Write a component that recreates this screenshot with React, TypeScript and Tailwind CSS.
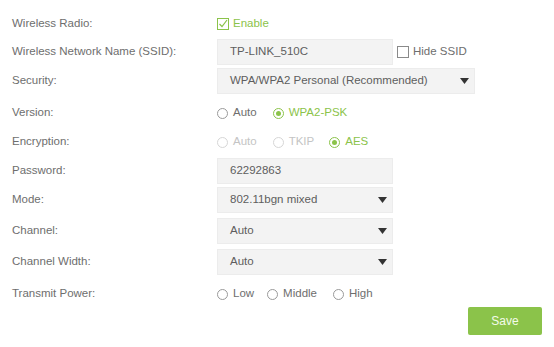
const GREEN = "text-[#8bc34a]";

function Row({ label, children, className = "" }: { label: string; children: React.ReactNode; className?: string }) {
  return (
    <div className={`flex items-center h-[26px] ${className}`}>
      <div className="w-[217px] pl-[12px] text-[#6e6e6e]">{label}</div>
      <div className="flex items-center">{children}</div>
    </div>
  );
}

function Radio({ label, checked = false, disabled = false, className = "" }: { label: string; checked?: boolean; disabled?: boolean; className?: string }) {
  const border = checked ? "border-[#8bc34a]" : disabled ? "border-[#d6d6d6]" : "border-[#9a9a9a]";
  const text = checked ? GREEN : disabled ? "text-[#c4c4c4]" : "text-[#6e6e6e]";
  return (
    <div className={`flex items-center ${className}`}>
      <span className={`w-[11px] h-[11px] rounded-full border ${border} flex items-center justify-center`}>
        {checked && <span className="w-[5px] h-[5px] rounded-full bg-[#8bc34a]" />}
      </span>
      <span className={`ml-[5px] ${text}`}>{label}</span>
    </div>
  );
}

function Check({ label, checked = false, className = "" }: { label: string; checked?: boolean; className?: string }) {
  return (
    <div className={`flex items-center ${className}`}>
      <span className={`w-[12px] h-[12px] border ${checked ? "border-[#8bc34a]" : "border-[#8a8a8a]"} flex items-center justify-center`}>
        {checked && (
          <svg width="10" height="10" viewBox="0 0 10 10">
            <path d="M1.5 5 L4 7.5 L9 1" fill="none" stroke="#8bc34a" strokeWidth="1.2" />
          </svg>
        )}
      </span>
      <span className={`ml-[4px] ${checked ? GREEN : "text-[#6e6e6e]"}`}>{label}</span>
    </div>
  );
}

function Field({ value, width, select = false }: { value: string; width: string; select?: boolean }) {
  return (
    <div className={`${width} h-[26px] bg-[#f3f3f3] border border-[#ececec] flex items-center pl-[12px] pr-[4px] text-[#5e5e5e]`}>
      <span className="flex-1">{value}</span>
      {select && (
        <svg width="9" height="6" viewBox="0 0 9 6" className="mr-[1px]">
          <path d="M0 0 L9 0 L4.5 6 Z" fill="#333" />
        </svg>
      )}
    </div>
  );
}

export default function App() {
  return (
    <div
      className="w-[554px] h-[347px] bg-white text-[11.5px] pt-[11px]"
      style={{ fontFamily: '"Liberation Sans", Arial, sans-serif' }}
    >
      <Row label="Wireless Radio:">
        <Check label="Enable" checked />
      </Row>
      <Row label="Wireless Network Name (SSID):" className="mt-[2px]">
        <Field value="TP-LINK_510C" width="w-[176px]" />
        <Check label="Hide SSID" className="ml-[4px]" />
      </Row>
      <Row label="Security:" className="mt-[3px]">
        <Field value="WPA/WPA2 Personal (Recommended)" width="w-[258px]" select />
      </Row>
      <Row label="Version:" className="mt-[6px]">
        <Radio label="Auto" />
        <Radio label="WPA2-PSK" checked className="ml-[16px]" />
      </Row>
      <Row label="Encryption:" className="mt-[3px]">
        <Radio label="Auto" disabled />
        <Radio label="TKIP" disabled className="ml-[16px]" />
        <Radio label="AES" checked className="ml-[15px]" />
      </Row>
      <Row label="Password:" className="mt-[3px]">
        <Field value="62292863" width="w-[176px]" />
      </Row>
      <Row label="Mode:" className="mt-[3px]">
        <Field value="802.11bgn mixed" width="w-[176px]" select />
      </Row>
      <Row label="Channel:" className="mt-[5px]">
        <Field value="Auto" width="w-[176px]" select />
      </Row>
      <Row label="Channel Width:" className="mt-[5px]">
        <Field value="Auto" width="w-[176px]" select />
      </Row>
      <Row label="Transmit Power:" className="mt-[6px]">
        <Radio label="Low" />
        <Radio label="Middle" className="ml-[13px]" />
        <Radio label="High" className="ml-[16px]" />
      </Row>
      <div className="flex justify-end pr-[12px]">
        <button className="w-[74px] h-[28px] bg-[#8bc34a] text-[#f4fbea] text-[12px] rounded-[2px]">Save</button>
      </div>
    </div>
  );
}
